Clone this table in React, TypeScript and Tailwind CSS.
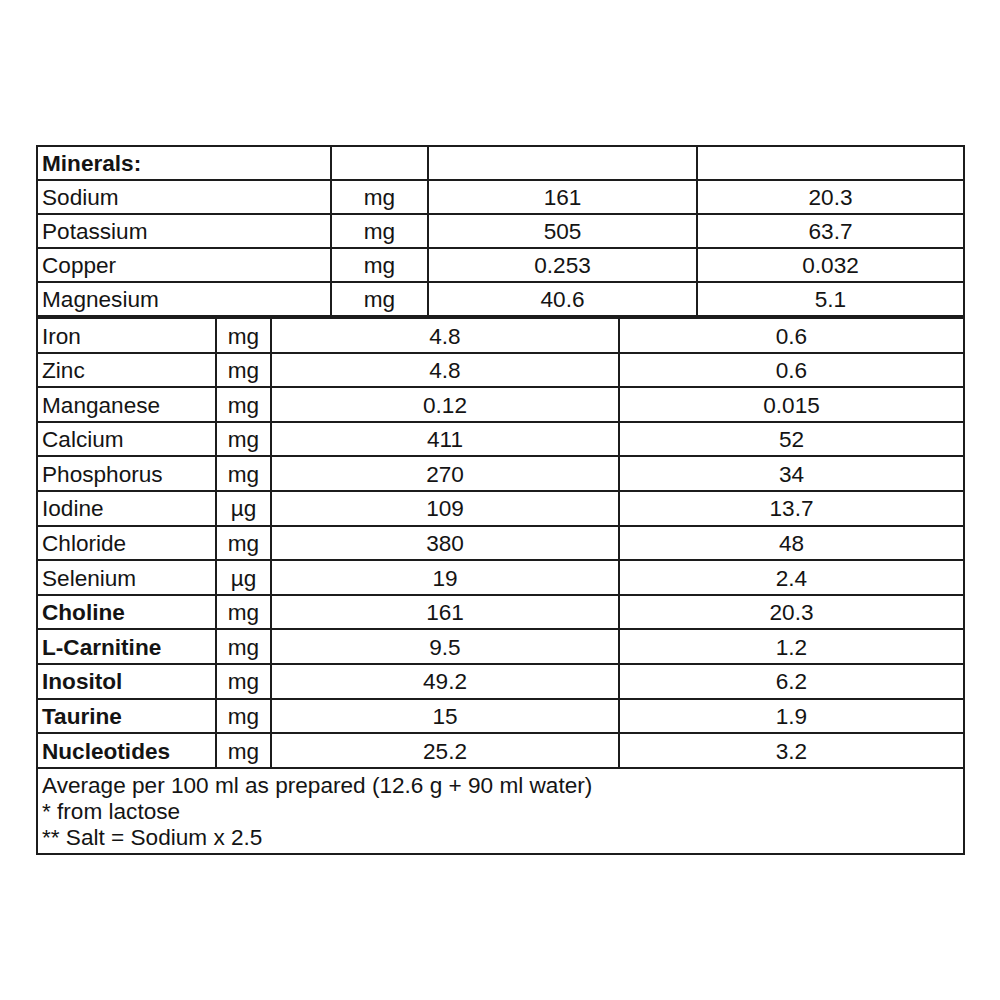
import React from 'react';

type Row = { name: string; unit: string; a: string; b: string; bold?: boolean };

const topRows: Row[] = [
  { name: 'Sodium', unit: 'mg', a: '161', b: '20.3' },
  { name: 'Potassium', unit: 'mg', a: '505', b: '63.7' },
  { name: 'Copper', unit: 'mg', a: '0.253', b: '0.032' },
  { name: 'Magnesium', unit: 'mg', a: '40.6', b: '5.1' },
];

const bottomRows: Row[] = [
  { name: 'Iron', unit: 'mg', a: '4.8', b: '0.6' },
  { name: 'Zinc', unit: 'mg', a: '4.8', b: '0.6' },
  { name: 'Manganese', unit: 'mg', a: '0.12', b: '0.015' },
  { name: 'Calcium', unit: 'mg', a: '411', b: '52' },
  { name: 'Phosphorus', unit: 'mg', a: '270', b: '34' },
  { name: 'Iodine', unit: 'µg', a: '109', b: '13.7' },
  { name: 'Chloride', unit: 'mg', a: '380', b: '48' },
  { name: 'Selenium', unit: 'µg', a: '19', b: '2.4' },
  { name: 'Choline', unit: 'mg', a: '161', b: '20.3', bold: true },
  { name: 'L-Carnitine', unit: 'mg', a: '9.5', b: '1.2', bold: true },
  { name: 'Inositol', unit: 'mg', a: '49.2', b: '6.2', bold: true },
  { name: 'Taurine', unit: 'mg', a: '15', b: '1.9', bold: true },
  { name: 'Nucleotides', unit: 'mg', a: '25.2', b: '3.2', bold: true },
];

const cell = 'flex items-center border-r-2 border-b-2 border-[#1c1c1c] pt-[3px]';

const App = () => {
  return (
    <div
      className="min-h-screen bg-white pt-[145px] pl-[36px] text-[22.6px] leading-none text-[#141414]"
      style={{ fontFamily: '"Liberation Sans", Arial, sans-serif' }}
    >
      <div className="w-[929px]">
        {/* Minerals block */}
        <div className="grid grid-cols-[294px_97px_269px_267px] border-l-2 border-t-2 border-[#1c1c1c]">
          <div className={`${cell} h-[34px] pl-1 font-bold`}>Minerals:</div>
          <div className={`${cell} h-[34px]`} />
          <div className={`${cell} h-[34px]`} />
          <div className={`${cell} h-[34px]`} />
          {topRows.map((r) => (
            <React.Fragment key={r.name}>
              <div className={`${cell} h-[34px] pl-1`}>{r.name}</div>
              <div className={`${cell} h-[34px] justify-center`}>{r.unit}</div>
              <div className={`${cell} h-[34px] justify-center`}>{r.a}</div>
              <div className={`${cell} h-[34px] justify-center`}>{r.b}</div>
            </React.Fragment>
          ))}
        </div>

        {/* Trace elements and others */}
        <div className="grid grid-cols-[179px_55px_348px_345px] border-l-2 border-t-2 border-[#1c1c1c]">
          {bottomRows.map((r) => (
            <React.Fragment key={r.name}>
              <div className={`${cell} h-[34.6px] pl-1 ${r.bold ? 'font-bold' : ''}`}>{r.name}</div>
              <div className={`${cell} h-[34.6px] justify-center`}>{r.unit}</div>
              <div className={`${cell} h-[34.6px] justify-center`}>{r.a}</div>
              <div className={`${cell} h-[34.6px] justify-center`}>{r.b}</div>
            </React.Fragment>
          ))}
          <div className="col-span-4 h-[86px] border-r-2 border-b-2 border-[#1c1c1c] pl-1 pt-1 leading-[26px]">
            <div>Average per 100 ml as prepared (12.6 g + 90 ml water)</div>
            <div>* from lactose</div>
            <div>** Salt = Sodium x 2.5</div>
          </div>
        </div>
      </div>
    </div>
  );
};

export default App;
